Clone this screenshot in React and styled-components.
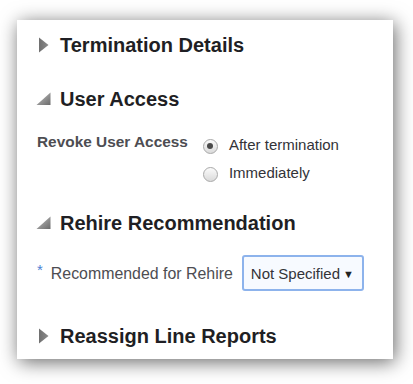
import React from "react";
import styled, { createGlobalStyle } from "styled-components";

const Global = createGlobalStyle`
  html, body { margin: 0; padding: 0; background: #ffffff; }
  body { font-family: "Liberation Sans", Arial, sans-serif; }
`;

const Page = styled.div`
  padding: 20px 20px 25px 17px;
  width: 413px;
  height: 384px;
  box-sizing: border-box;
  overflow: hidden;
`;

const Card = styled.div`
  width: 376px;
  height: 339px;
  box-sizing: border-box;
  background: #fff;
  box-shadow: 2px 3px 18px rgba(0, 0, 0, 0.6);
  padding: 13px 20px 10px 20px;
  display: flex;
  flex-direction: column;
`;

const Heading = styled.div`
  display: flex;
  align-items: center;
  height: 24px;
  margin-top: ${(p) => p.$mt || 0}px;
  font-size: 20px;
  line-height: 24px;
  font-weight: bold;
  color: #1f1f24;
  white-space: nowrap;
`;

const IconBox = styled.span`
  width: 23px;
  height: 24px;
  flex: none;
  display: flex;
  align-items: flex-start;
  padding-top: ${(p) => p.$pt}px;
  box-sizing: border-box;
`;

const Row = styled.div`
  display: flex;
  align-items: ${(p) => p.$align || "flex-start"};
  gap: ${(p) => p.$gap}px;
  margin-top: ${(p) => p.$mt}px;
`;

const Label = styled.span`
  font-size: ${(p) => p.$size}px;
  line-height: 18px;
  padding-top: 2px;
  font-weight: ${(p) => (p.$bold ? "bold" : "normal")};
  color: #4d4d52;
  white-space: nowrap;
`;

const Star = styled.span`
  color: #4b7fd4;
  font-size: 15px;
  position: relative;
  top: -4px;
  margin-right: 8px;
`;

const RadioGroup = styled.div`
  display: flex;
  flex-direction: column;
`;

const RadioRow = styled.label`
  display: flex;
  align-items: center;
  height: 28px;
  font-size: 15px;
  line-height: 28px;
  color: #333338;
  gap: 11px;
`;

const Circle = styled.span`
  width: 15px;
  height: 15px;
  box-sizing: border-box;
  border-radius: 50%;
  border: 1px solid #a9a9a9;
  background: linear-gradient(#fbfbfb, #dadada);
  display: flex;
  align-items: center;
  justify-content: center;
  margin-top: 2px;
  &::after {
    content: "";
    width: 6px;
    height: 6px;
    border-radius: 50%;
    background: ${(p) => (p.$checked ? "#4a4a4a" : "transparent")};
  }
`;

const Select = styled.div`
  width: 122px;
  height: 36px;
  box-sizing: border-box;
  border: 2px solid #8db3ec;
  border-radius: 3px;
  background: #f7faff;
  display: flex;
  align-items: center;
  padding: 0 8px 0 7px;
  font-size: 15px;
  color: #333338;
  justify-content: space-between;
`;

const Arrow = styled.span`
  font-size: 11px;
  color: #222;
  margin-top: 1px;
`;

const Collapsed = () => (
  <IconBox $pt={4}>
    <svg width="12" height="16" viewBox="0 0 12 16">
      <defs>
        <linearGradient id="tg" x1="0" x2="1" y1="0" y2="0">
          <stop offset="0" stopColor="#6f6f6f" />
          <stop offset="1" stopColor="#8c8c8c" />
        </linearGradient>
      </defs>
      <path d="M2 0.5 L11.5 8 L2 15.5 Z" fill="url(#tg)" />
    </svg>
  </IconBox>
);

const Expanded = () => (
  <IconBox $pt={5}>
    <svg width="16" height="14" viewBox="0 0 16 14" style={{ marginLeft: -1 }}>
      <defs>
        <linearGradient id="eg" x1="0" x2="1" y1="0" y2="1">
          <stop offset="0" stopColor="#c4c4c4" />
          <stop offset="1" stopColor="#6a6a6a" />
        </linearGradient>
      </defs>
      <path d="M14.5 0.5 L14.5 13 L0.5 13 Z" fill="url(#eg)" />
    </svg>
  </IconBox>
);

export default function App() {
  return (
    <>
      <Global />
      <Page>
        <Card>
          <Heading>
            <Collapsed />
            Termination Details
          </Heading>
          <Heading $mt={30}>
            <Expanded />
            User Access
          </Heading>
          <Row $mt={20} $gap={15}>
            <Label $bold $size={15.4}>Revoke User Access</Label>
            <RadioGroup>
              <RadioRow>
                <Circle $checked />
                After termination
              </RadioRow>
              <RadioRow>
                <Circle />
                Immediately
              </RadioRow>
            </RadioGroup>
          </Row>
          <Heading $mt={24}>
            <Expanded />
            Rehire Recommendation
          </Heading>
          <Row $mt={20} $gap={9} $align="center">
            <Label $size={15.9}>
              <Star>*</Star>Recommended for Rehire
            </Label>
            <Select>
              Not Specified
              <Arrow>▼</Arrow>
            </Select>
          </Row>
          <Heading $mt={33}>
            <Collapsed />
            Reassign Line Reports
          </Heading>
        </Card>
      </Page>
    </>
  );
}
